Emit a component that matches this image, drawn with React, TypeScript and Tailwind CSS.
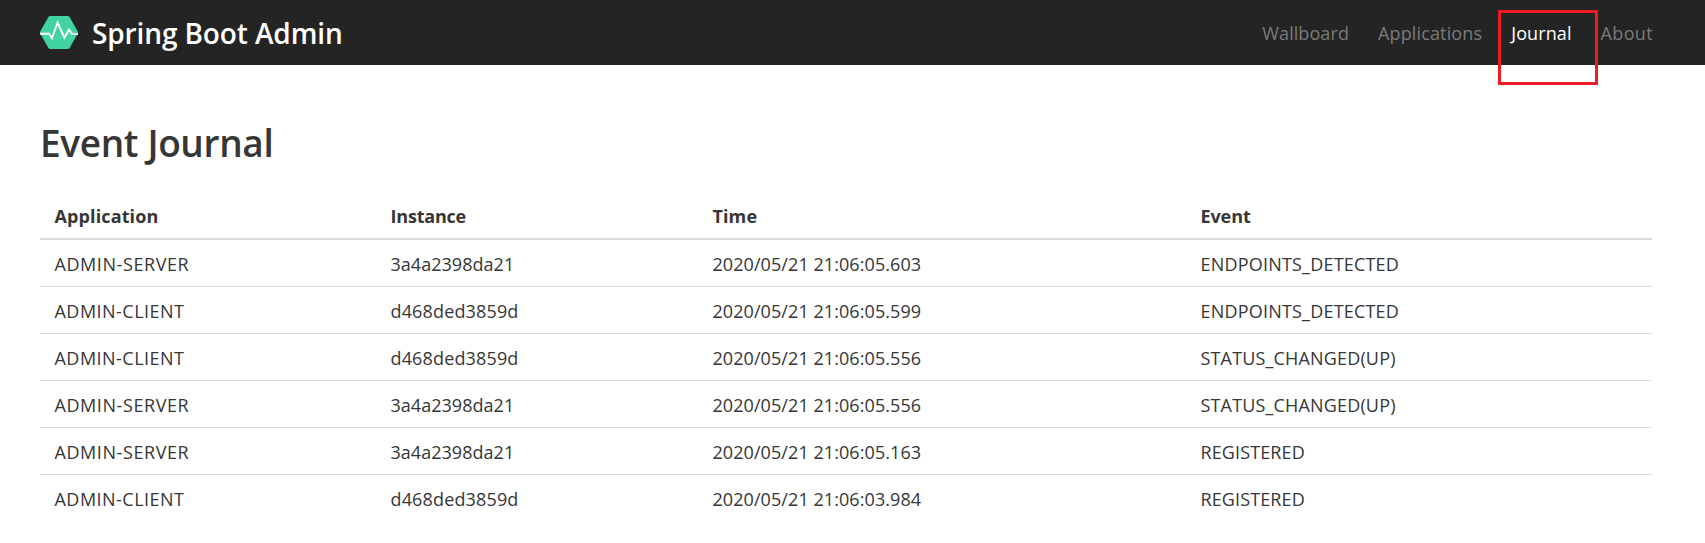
const navItems = [
  { label: "Wallboard", style: "tracking-[0.08px] text-[#7a7a7a]" },
  { label: "Applications", style: "tracking-[0.14px] text-[#7a7a7a]" },
  { label: "Journal", style: "tracking-[0.1px] text-white" },
  { label: "About", style: "tracking-[0.35px] text-[#7a7a7a]" },
];

const spacing: Record<string, string> = {
  "ADMIN-SERVER": "tracking-[0.58px]",
  "ADMIN-CLIENT": "tracking-[0.47px]",
  "3a4a2398da21": "tracking-[0.03px]",
  d468ded3859d: "tracking-[0.15px]",
  ENDPOINTS_DETECTED: "tracking-[0.2px]",
  "STATUS_CHANGED(UP)": "tracking-[0.16px]",
  REGISTERED: "tracking-[0.12px]",
};

const events = [
  ["ADMIN-SERVER", "3a4a2398da21", "2020/05/21 21:06:05.603", "ENDPOINTS_DETECTED"],
  ["ADMIN-CLIENT", "d468ded3859d", "2020/05/21 21:06:05.599", "ENDPOINTS_DETECTED"],
  ["ADMIN-CLIENT", "d468ded3859d", "2020/05/21 21:06:05.556", "STATUS_CHANGED(UP)"],
  ["ADMIN-SERVER", "3a4a2398da21", "2020/05/21 21:06:05.556", "STATUS_CHANGED(UP)"],
  ["ADMIN-SERVER", "3a4a2398da21", "2020/05/21 21:06:05.163", "REGISTERED"],
  ["ADMIN-CLIENT", "d468ded3859d", "2020/05/21 21:06:03.984", "REGISTERED"],
];

function Logo() {
  return (
    <svg className="h-[33px] w-[38px]" viewBox="0 0 38 33" fill="none">
      <path d="M10.4 0h17.2q1.3 0 2 1.1l7.9 14q.8 1.4 0 2.8l-7.9 14q-.7 1.1-2 1.1H10.4q-1.3 0-2-1.1l-7.9-14q-.8-1.4 0-2.8l7.9-14Q9.100 0 10.400 0z" fill="#42d3a5" />
      <path d="M0 17.700h9l3 4.500L17.600 6.500l6.800 15.200 4.600-7.900 3.200 4.300H38" stroke="#fff" strokeWidth="1.900" />
    </svg>
  );
}

export default function App() {
  return (
    <div className="h-[543px] w-full overflow-hidden bg-white font-['Open_Sans','Noto_Sans',sans-serif] text-[18px] leading-[27px] text-[#363636]">
      <header className="flex h-[65px] items-center justify-between bg-[#242424] pr-[52px] pl-10">
        <div className="flex items-center gap-[14px]">
          <Logo />
          <span className="text-[28px] leading-[42px] font-semibold tracking-[-0.11px] text-white">Spring Boot Admin</span>
        </div>
        <nav className="flex items-center gap-[29px] pt-[2px]">
          {navItems.map((item) => (
            <a key={item.label} className={item.style}>
              {item.label}
            </a>
          ))}
        </nav>
      </header>
      <div className="absolute top-[10px] left-[1498px] h-[75px] w-[100px] border-[3px] border-[#ed1c24]" />

      <main className="pt-[55px] pr-[53px] pl-10">
        <h1 className="mb-[26px] text-[37px] leading-[46px] font-semibold tracking-[-0.35px]">Event Journal</h1>
        <table className="w-full table-fixed border-separate border-spacing-0 text-left">
          <colgroup>
            <col className="w-[336px]" />
            <col className="w-[322px]" />
            <col className="w-[488px]" />
            <col />
          </colgroup>
          <thead>
            <tr className="h-[48px] [&>th]:border-b-2 [&>th]:border-[#dbdbdb] [&>th]:pt-[2px] [&>th]:pb-0">
              <th className="px-[14.5px] font-bold tracking-[0.12px]">Application</th>
              <th className="px-[14.5px] font-bold tracking-[-0.2px]">Instance</th>
              <th className="px-[14.5px] font-bold tracking-[0.1px]">Time</th>
              <th className="px-[14.5px] font-bold tracking-[-0.1px]">Event</th>
            </tr>
          </thead>
          <tbody>
            {events.map((row, i) => (
              <tr key={i} className="h-[47px] [&>td]:border-b [&>td]:border-[#dbdbdb] last:[&>td]:border-transparent">
                {row.map((cell, j) => (
                  <td key={j} className={`px-[14.5px] pt-[2px] pb-0 ${spacing[cell] ?? "tracking-[0.07px]"}`}>
                    {cell}
                  </td>
                ))}
              </tr>
            ))}
          </tbody>
        </table>
      </main>
    </div>
  );
}
